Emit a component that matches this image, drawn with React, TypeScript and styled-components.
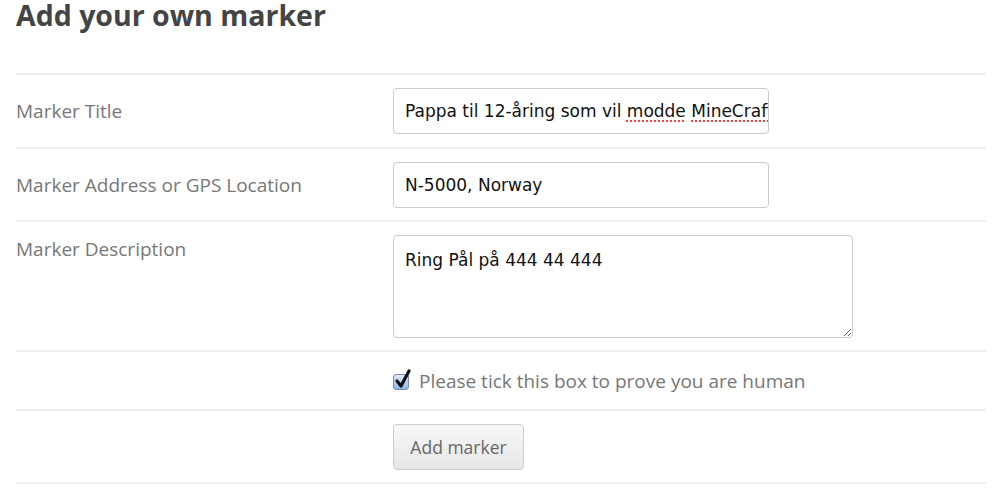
import React, { useState } from "react";
import styled, { createGlobalStyle } from "styled-components";

const GlobalStyle = createGlobalStyle`
    html, body {
        margin: 0;
        padding: 0;
        background: #fff;
    }
    body {
        font-family: "Open Sans", "Liberation Sans", sans-serif;
        color: #666;
    }
`;

const Page = styled.div`
    width: 970px;
    padding: 0 14px 0 16px;
`;

const Heading = styled.h2`
    margin: 0;
    padding-top: 1px;
    height: 72px;
    font-size: 28.5px;
    line-height: 28px;
    font-weight: 700;
    color: #444;
`;

const Form = styled.form`
    display: flex;
    flex-direction: column;
    border-bottom: 2px solid #eee;
`;

const Row = styled.div<{ $height: number }>`
    display: grid;
    grid-template-columns: 377px 1fr;
    align-items: center;
    height: ${(p) => p.$height}px;
    border-top: 2px solid #eee;
    box-sizing: border-box;
`;

const Label = styled.label<{ $top?: boolean }>`
    font-size: 19px;
    color: #777;
    align-self: ${(p) => (p.$top ? "start" : "center")};
    padding-top: ${(p) => (p.$top ? "14px" : "0")};
    line-height: 26px;
`;

const fieldBase = `
    box-sizing: border-box;
    border: 1px solid #ccc;
    border-radius: 4px;
    background: #fff;
    font-family: "DejaVu Sans", sans-serif;
    font-size: 17px;
    color: #111;
    padding: 0 11px;
    outline: none;
`;

const TextBox = styled.div`
    ${fieldBase}
    width: 376px;
    height: 46px;
    line-height: 44px;
    white-space: nowrap;
    overflow: hidden;
`;

const Misspelt = styled.span`
    text-decoration: underline dotted #e44;
    text-decoration-thickness: 2px;
    text-underline-offset: 3px;
`;

const Input = styled.input`
    ${fieldBase}
    width: 376px;
    height: 46px;
`;

const TextArea = styled.textarea`
    ${fieldBase}
    width: 460px;
    height: 103px;
    padding: 12px 11px;
    line-height: 24px;
    resize: vertical;
`;

const CheckLabel = styled.label`
    display: flex;
    align-items: center;
    gap: 10px;
    font-size: 19px;
    color: #777;
    cursor: pointer;
`;

const HiddenCheck = styled.input`
    display: none;
`;

const CheckBox = styled.span`
    position: relative;
    width: 16px;
    height: 16px;
    box-sizing: border-box;
    border: 1px solid #7a8ea6;
    border-radius: 3px;
    background: linear-gradient(#dbe9fb, #8fb6e8);
    margin-top: 2px;

    svg {
        position: absolute;
        left: 1px;
        top: -6px;
    }
`;

const Button = styled.button`
    box-sizing: border-box;
    width: 131px;
    height: 46px;
    border: 1px solid #ccc;
    border-radius: 4px;
    background: linear-gradient(#f8f8f8, #e6e6e6);
    font-family: "Open Sans", "Liberation Sans", sans-serif;
    font-size: 17.5px;
    color: #666;
    cursor: pointer;
`;

const Empty = styled.div``;

export default function App() {
    const [human, setHuman] = useState(true);

    return (
        <Page>
            <GlobalStyle />
            <Heading>Add your own marker</Heading>
            <Form onSubmit={(e) => e.preventDefault()}>
                <Row $height={74}>
                    <Label>Marker Title</Label>
                    <TextBox>
                        Pappa til 12-åring som vil <Misspelt>modde</Misspelt>{" "}
                        <Misspelt>MineCraft</Misspelt>
                    </TextBox>
                </Row>
                <Row $height={73}>
                    <Label>Marker Address or GPS Location</Label>
                    <Input defaultValue="N-5000, Norway" />
                </Row>
                <Row $height={130}>
                    <Label $top>Marker Description</Label>
                    <TextArea defaultValue="Ring Pål på 444 44 444" />
                </Row>
                <Row $height={59}>
                    <Empty />
                    <CheckLabel>
                        <HiddenCheck
                            type="checkbox"
                            checked={human}
                            onChange={() => setHuman((v) => !v)}
                        />
                        <CheckBox>
                            {human && (
                                <svg width="16" height="20" viewBox="0 0 16 20">
                                    <path
                                        d="M2 12 L6 17 L14 2"
                                        fill="none"
                                        stroke="#111"
                                        strokeWidth="3.2"
                                        strokeLinecap="round"
                                        strokeLinejoin="round"
                                    />
                                </svg>
                            )}
                        </CheckBox>
                        Please tick this box to prove you are human
                    </CheckLabel>
                </Row>
                <Row $height={73}>
                    <Empty />
                    <Button type="submit">Add marker</Button>
                </Row>
            </Form>
        </Page>
    );
}
